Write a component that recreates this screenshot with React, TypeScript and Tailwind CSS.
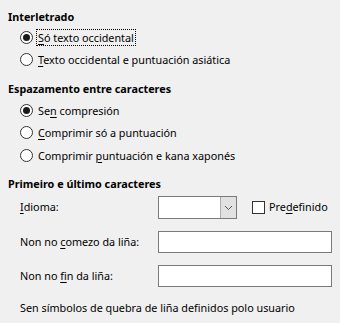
import React from "react";

function U({ children }: { children: React.ReactNode }) {
  return <span className="underline underline-offset-2 decoration-[1px]">{children}</span>;
}

function Radio({ checked, focus, children, top }: { checked?: boolean; focus?: boolean; children: React.ReactNode; top: string }) {
  return (
    <div className={`flex items-center h-[22px] pl-[12px] ${top}`}>
      <div className="w-[13px] h-[13px] rounded-full border border-[#333333] bg-white flex items-center justify-center shrink-0">
        {checked && <div className="w-[7px] h-[7px] rounded-full bg-[#1a1a1a]" />}
      </div>
      <span className={`ml-[3px] px-[1px] leading-[15px] ${focus ? "border border-dotted border-black" : "border border-transparent"}`}>
        {children}
      </span>
    </div>
  );
}

export default function App() {
  return (
    <div className="w-[340px] h-[323px] bg-[#f0f0f0] text-black text-[10.8px] font-['Noto_Sans',sans-serif] overflow-hidden pl-[8px] pt-[8px]">
      <div className="h-[18px] flex items-center font-bold">Interletrado</div>
      <Radio checked focus top="">
        <U>S</U>ó texto occidental
      </Radio>
      <Radio top="">
        <U>T</U>exto occidental e puntuación asiática
      </Radio>

      <div className="h-[18px] flex items-center font-bold mt-[10px]">Espazamento entre caracteres</div>
      <Radio checked top="mt-[1px]">
        Se<U>n</U> compresión
      </Radio>
      <Radio top="">
        <U>C</U>omprimir só a puntuación
      </Radio>
      <Radio top="mt-[1px]">
        Comprimir <U>p</U>untuación e kana xaponés
      </Radio>

      <div className="h-[18px] flex items-center font-bold mt-[9px]">Primeiro e último caracteres</div>

      <div className="flex items-center h-[23px] mt-[3px]">
        <div className="w-[150px] pl-[12px]">
          <U>I</U>dioma:
        </div>
        <div className="w-[79px] h-[23px] border border-[#7a7a7a] bg-white flex">
          <div className="flex-1" />
          <div className="w-[16px] h-full bg-[#e1e1e1] border-l border-[#adadad] flex items-center justify-center">
            <svg width="9" height="6" viewBox="0 0 9 6">
              <path d="M1 1 L4.5 4.5 L8 1" fill="none" stroke="#555" strokeWidth="1" />
            </svg>
          </div>
        </div>
        <div className="ml-[15px] flex items-center">
          <div className="w-[13px] h-[13px] border border-[#333333] bg-white" />
          <span className="ml-[4px]">
            Pre<U>d</U>efinido
          </span>
        </div>
      </div>

      <div className="flex items-center h-[22px] mt-[12px]">
        <div className="w-[150px] pl-[12px]">
          Non no <U>c</U>omezo da liña:
        </div>
        <div className="w-[174px] h-[22px] border border-[#7a7a7a] bg-white" />
      </div>

      <div className="flex items-center h-[22px] mt-[12px]">
        <div className="w-[150px] pl-[12px]">
          Non no <U>f</U>in da liña:
        </div>
        <div className="w-[174px] h-[22px] border border-[#7a7a7a] bg-white" />
      </div>

      <div className="h-[18px] flex items-center pl-[12px] mt-[12px]">
        Sen símbolos de quebra de liña definidos polo usuario
      </div>
    </div>
  );
}
